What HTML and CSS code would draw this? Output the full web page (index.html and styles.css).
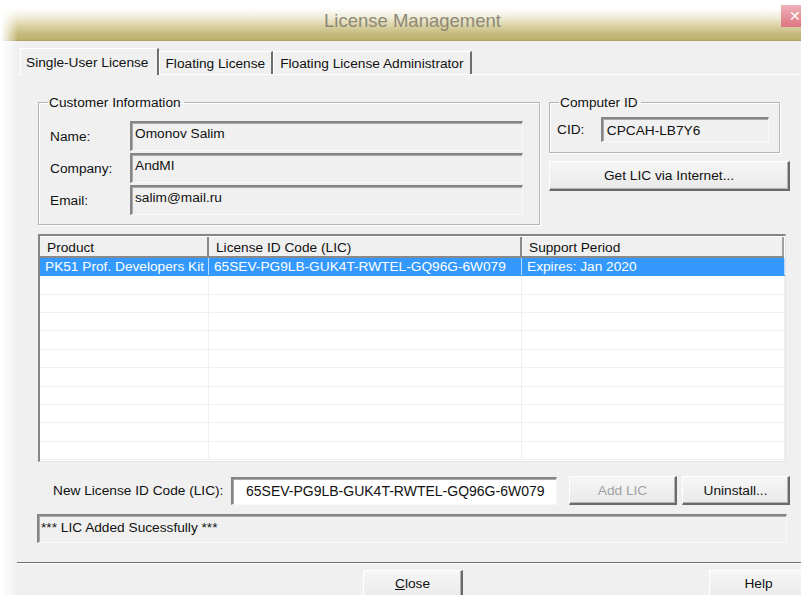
FILE: index.html
```html
<!DOCTYPE html>
<html lang="en">
<head>
<meta charset="utf-8">
<title>License Management</title>
<link rel="stylesheet" href="styles.css">
</head>
<body>
<div class="window">
  <header class="titlebar">
    <span class="title">License Management</span>
    <span class="close">&#x2715;</span>
  </header>

  <div class="client">
    <nav class="tabs">
      <span class="tab active">Single-User License</span>
      <span class="tab">Floating License</span>
      <span class="tab">Floating License Administrator</span>
    </nav>

    <section class="pane">
      <div class="top-row">
        <fieldset class="group customer">
          <legend>Customer Information</legend>
          <div class="form">
            <label>Name:</label><div class="field sunken">Omonov Salim</div>
            <label>Company:</label><div class="field sunken">AndMI</div>
            <label>Email:</label><div class="field sunken">salim@mail.ru</div>
          </div>
        </fieldset>

        <div class="side">
          <fieldset class="group computer">
            <legend>Computer ID</legend>
            <div class="cid-row">
              <label>CID:</label><div class="field sunken cid">CPCAH-LB7Y6</div>
            </div>
          </fieldset>
          <button class="btn wide">Get LIC via Internet...</button>
        </div>
      </div>

      <div class="listview">
        <div class="lv-header">
          <span>Product</span>
          <span>License ID Code (LIC)</span>
          <span>Support Period</span>
        </div>
        <div class="lv-body">
          <div class="lv-row selected"><span>PK51 Prof. Developers Kit</span><span>65SEV-PG9LB-GUK4T-RWTEL-GQ96G-6W079</span><span>Expires: Jan 2020</span></div>
          <div class="lv-row"><span></span><span></span><span></span></div>
          <div class="lv-row"><span></span><span></span><span></span></div>
          <div class="lv-row"><span></span><span></span><span></span></div>
          <div class="lv-row"><span></span><span></span><span></span></div>
          <div class="lv-row"><span></span><span></span><span></span></div>
          <div class="lv-row"><span></span><span></span><span></span></div>
          <div class="lv-row"><span></span><span></span><span></span></div>
          <div class="lv-row"><span></span><span></span><span></span></div>
          <div class="lv-row"><span></span><span></span><span></span></div>
          <div class="lv-row"><span></span><span></span><span></span></div>
        </div>
      </div>

      <div class="add-row">
        <label class="add-label">New License ID Code (LIC):</label>
        <div class="field sunken entry">65SEV-PG9LB-GUK4T-RWTEL-GQ96G-6W079</div>
        <button class="btn small" disabled>Add LIC</button>
        <button class="btn small">Uninstall...</button>
      </div>

      <div class="status sunken">*** LIC Added Sucessfully ***</div>
    </section>

    <footer class="footer">
      <button class="btn foot close-btn"><u>C</u>lose</button>
      <button class="btn foot help-btn">Help</button>
    </footer>
  </div>
</div>
</body>
</html>
```

FILE: styles.css
```css
* {
  box-sizing: border-box;
}

html, body {
  margin: 0;
  padding: 0;
  background: #ffffff;
}

body {
  width: 801px;
  height: 595px;
  overflow: hidden;
  font-family: "Liberation Sans", Arial, sans-serif;
  font-size: 13.7px;
  color: #111;
}

.window {
  position: relative;
  width: 801px;
  height: 595px;
  display: flex;
  flex-direction: column;
  overflow: hidden;
}

.window > *,
.client > * {
  flex-shrink: 0;
}

/* soft fade along the left edge of the window */
.window::before {
  content: "";
  position: absolute;
  left: 0;
  top: 0;
  bottom: 0;
  width: 18px;
  background: linear-gradient(to right, #ffffff 5%, rgba(255,255,255,0.55) 50%, rgba(255,255,255,0));
  pointer-events: none;
  z-index: 2;
}

/* ---------- title bar ---------- */
.titlebar {
  height: 41px;
  display: flex;
  align-items: flex-start;
  background: linear-gradient(to bottom, #ffffff 0%, #ffffff 20%, #f1eedc 42%, #d9d0a2 66%, #c5b97a 86%, #bdb06c 100%);
  border-bottom: 1px solid #aea469;
}

.title {
  flex: 1;
  padding-left: 44px;
  padding-top: 10px;
  text-align: center;
  font-size: 18.5px;
  color: #8d8976;
}

.close {
  width: 20px;
  height: 22px;
  margin-top: 5px;
  background: linear-gradient(to bottom, #efb3ba, #dd7482);
  color: #ffffff;
  font-size: 14px;
  line-height: 22px;
  text-align: right;
  overflow: hidden;
}

/* ---------- dialog client area ---------- */
.client {
  flex: 1;
  background: #f0f0f0;
  display: flex;
  flex-direction: column;
}

.tabs {
  display: flex;
  align-items: flex-end;
  padding-left: 20px;
  margin-top: 6px;
  height: 27px;
}

.tab {
  height: 23px;
  padding: 3px 6px 0 6px;
  background: #f0f0f0;
  border-top: 1px solid #ffffff;
  border-left: 1px solid #ffffff;
  border-right: 2px solid #6e6e6e;
  line-height: 17px;
  white-space: nowrap;
}

.tab.active {
  height: 27px;
  padding: 5px 8px 0 5px;
  position: relative;
  z-index: 1;
  margin-bottom: -1px;
}

.pane {
  margin-left: 17px;
  padding: 19px 11px 0 21px;
  border-top: 1px solid #ffffff;
  border-bottom: 1px solid #6f6f6f;
  box-shadow: 0 1px 0 #ffffff;
}

/* ---------- group boxes ---------- */
.top-row {
  display: grid;
  grid-template-columns: 502px 241px;
  column-gap: 9px;
  align-items: start;
}

.group {
  margin: 0;
  border: 1px solid #b5b5b5;
  box-shadow: inset 1px 1px 0 #ffffff, 1px 1px 0 #ffffff;
  padding: 0;
  min-width: 0;
}

.group legend {
  padding: 0 3px 0 1px;
  line-height: 17px;
}

.customer {
  height: 131px;
  padding: 10px 16px 0 11px;
}

.customer legend {
  margin-left: -2px;
}

.form {
  display: grid;
  grid-template-columns: 80px 1fr;
  grid-auto-rows: 30px;
  row-gap: 2px;
  align-items: center;
}

.field {
  background: #f0f0f0;
  padding: 2px 3px 0 3px;
  line-height: 17px;
  white-space: nowrap;
  overflow: hidden;
}

.form .field {
  height: 30px;
}

.sunken {
  border-style: solid;
  border-width: 2px 1px 1px 2px;
  border-color: #858585 #f8f8f8 #f8f8f8 #858585;
  box-shadow: inset 1px 1px 0 #a9a9a9;
}

.side {
  display: flex;
  flex-direction: column;
  gap: 8px;
}

.computer {
  width: 231px;
  height: 59px;
  padding: 6px 10px 0 7px;
}

.computer legend {
  margin-left: 2px;
}

.cid-row {
  display: flex;
  align-items: center;
}

.cid-row label {
  width: 44px;
}

.cid {
  width: 169px;
  height: 25px;
  padding-top: 3px;
  padding-left: 4px;
}

/* ---------- buttons ---------- */
.btn {
  font-family: inherit;
  font-size: inherit;
  color: #111;
  background: linear-gradient(to bottom, #f6f6f6, #e9e9e9);
  border-style: solid;
  border-width: 1px 2px 2px 1px;
  border-color: #ffffff #6a6a6a #6a6a6a #ffffff;
  box-shadow: inset -1px -1px 0 #b4b4b4;
  padding: 0;
  text-align: center;
}

.btn.wide {
  width: 241px;
  height: 30px;
}

.btn[disabled] {
  color: #a2a2a2;
}

/* ---------- list view ---------- */
.listview {
  margin-top: 9px;
  width: 748px;
  height: 228px;
  background: #ffffff;
  border-style: solid;
  border-width: 2px 1px 1px 2px;
  border-color: #858585 #e4e4e4 #e4e4e4 #858585;
  overflow: hidden;
}

.lv-header,
.lv-row {
  display: grid;
  grid-template-columns: 169px 313px 1fr;
}

.lv-header {
  height: 22px;
  background: #f0f0f0;
  border-top: 1px solid #ffffff;
  border-bottom: 2px solid #8a8a8a;
  margin-right: 1px;
}

.lv-header span {
  padding: 2px 0 0 7px;
  line-height: 17px;
  border-right: 2px solid #8a8a8a;
}

.lv-header span:last-child {
  border-right-color: #a0a0a0;
}

.lv-row {
  height: 18.36px;
  border-bottom: 1px solid #f0f0f0;
}

.lv-row span {
  padding-left: 5px;
  line-height: 17px;
  border-right: 1px solid #f0f0f0;
  white-space: nowrap;
  overflow: hidden;
}

.lv-row.selected {
  background: #3399ff;
  color: #ffffff;
  border-bottom-color: #3399ff;
}

.lv-row.selected span {
  border-right-color: #bcdcff;
}

/* ---------- add / status ---------- */
.add-row {
  margin-top: 14px;
  display: flex;
  align-items: center;
  height: 29px;
}

.add-label {
  padding-left: 15px;
  width: 193px;
}

.entry {
  width: 326px;
  height: 28px;
  background: #ffffff;
  padding: 4px 0 0 13px;
  font-size: 14px;
}

.btn.small {
  width: 108px;
  height: 29px;
}

.add-row .btn.small:first-of-type {
  margin-left: 12px;
}

.add-row .btn.small + .btn.small {
  margin-left: 5px;
}

.status {
  margin-top: 9px;
  margin-left: -1px;
  margin-bottom: 19px;
  width: 750px;
  height: 29px;
  padding: 4px 0 0 2px;
  background: #f0f0f0;
}

/* ---------- footer buttons ---------- */
.footer {
  display: flex;
  padding-top: 7px;
  padding-left: 363px;
}

.btn.foot {
  width: 100px;
  height: 34px;
  padding-bottom: 6px;
}

.help-btn {
  margin-left: auto;
  margin-right: -8px;
}
```
